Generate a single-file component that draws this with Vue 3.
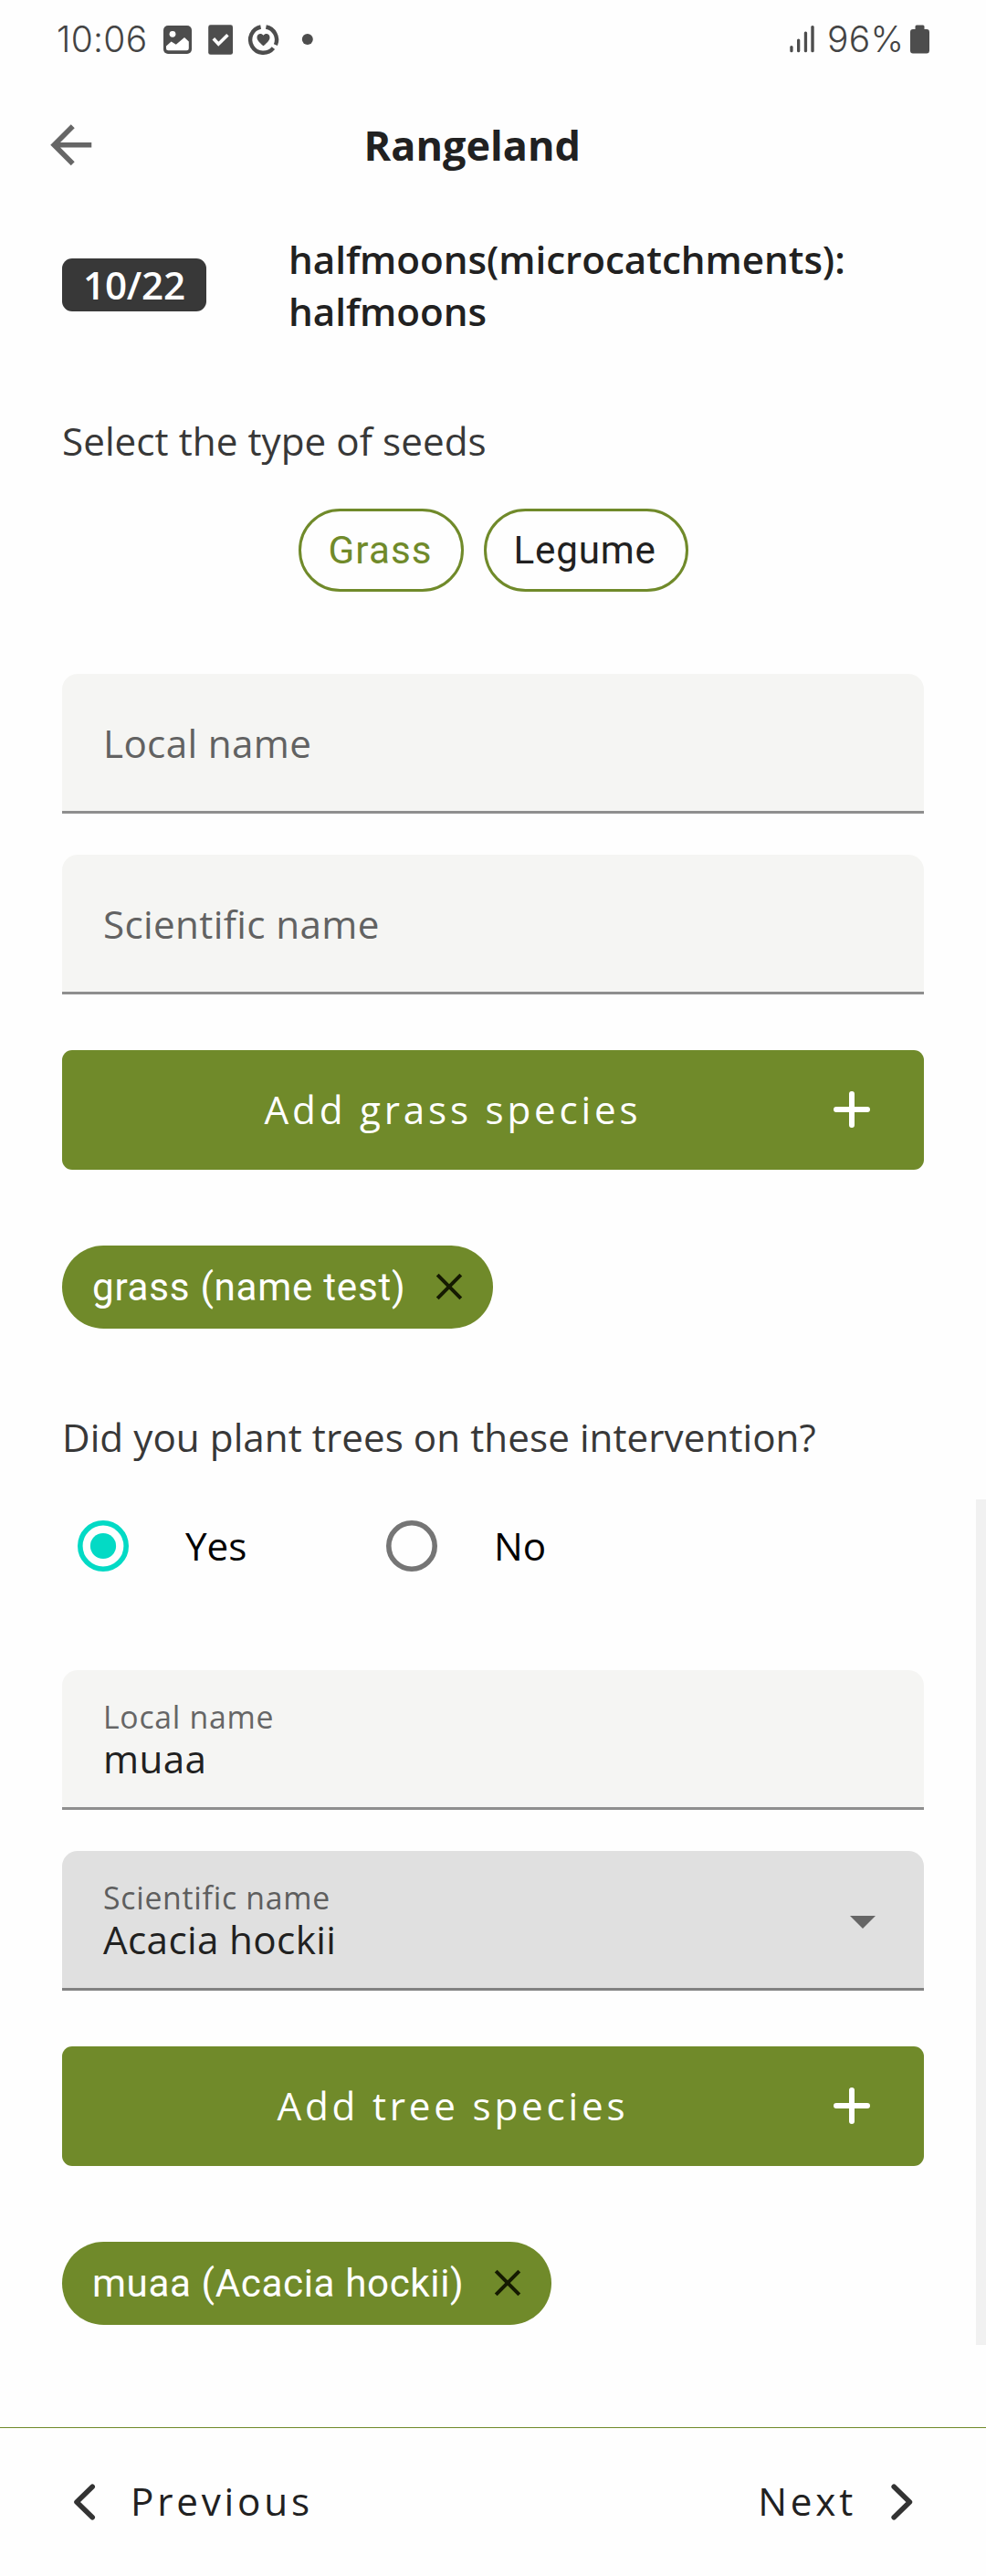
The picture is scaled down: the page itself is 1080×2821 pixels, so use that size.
<script setup>
import { ref } from 'vue'

const seedTypes = ['Grass', 'Legume']
const selectedSeed = ref('Grass')
const plantedTrees = ref('Yes')
</script>

<template>
  <div class="screen">
    <header class="status">
      <span class="clock">10:06</span>
      <svg class="status-icons" width="170" height="40" viewBox="175 23 170 40">
        <rect x="179" y="28" width="31" height="31" rx="5" fill="#4d4d4d" />
        <circle cx="189" cy="37.3" r="3.4" fill="#fff" />
        <path d="M182 50.6L187.6 45.4L192.8 48.7L202 41L206.8 45.4V53q0 2.3-2.3 2.3H184.300q-2.3 0-2.3-2.300Z" fill="#fff" />
        <rect x="228.200" y="27.300" width="26.800" height="32.500" rx="2.400" fill="#4d4d4d" />
        <path d="M233.800 42.200L239.300 48.200L249.400 38.300" fill="none" stroke="#fff" stroke-width="3.600" />
        <g fill="none" stroke="#4d4d4d" stroke-width="4.400">
          <path d="M291.400 29.500A14.300 14.300 0 0 1 301.900 49.100" />
          <path d="M299.400 52.700A14.300 14.300 0 1 1 285.600 29.500" />
        </g>
        <path d="M288.500 50.300c-2.500-2.300-7-5.500-7-9.300 0-4.300 4.900-5.200 7-2.200 2.100-3 7-2.100 7 2.200 0 3.800-4.500 7-7 9.300Z" fill="#4d4d4d" />
        <circle cx="336.800" cy="43" r="6" fill="#4d4d4d" />
      </svg>
      <svg class="signal" width="28" height="31" viewBox="865 27 28 31" fill="#4d4d4d">
        <rect x="865.300" y="50" width="3.300" height="7.300" rx="1.600" />
        <rect x="873" y="42.500" width="3.300" height="14.800" rx="1.600" />
        <rect x="880.800" y="34.500" width="3.300" height="22.800" rx="1.600" />
        <rect x="888.300" y="28" width="3.400" height="29.300" rx="1.600" />
      </svg>
      <span class="percent">96%</span>
      <svg class="battery" width="21" height="32" viewBox="0 0 21 32" fill="#4d4d4d">
        <path d="M5.500 5V2q0-1.500 1.500-1.500h7q1.500 0 1.500 1.500V5H18q3 0 3 3V28.500q0 3-3 3H3q-3 0-3-3V8q0-3 3-3Z" />
      </svg>
    </header>

    <nav class="appbar">
      <svg class="back" width="67.500" height="67.500" viewBox="0 0 24 24" fill="#666">
        <path d="M20 11H7.830l5.590-5.590L12 4l-8 8 8 8 1.410-1.410L7.830 13H20v-2z" />
      </svg>
      <h1>Rangeland</h1>
    </nav>

    <main>
      <section class="step">
        <span class="badge">10/22</span>
        <h2>halfmoons(microcatchments):<br />halfmoons</h2>
      </section>

      <p class="question">Select the type of seeds</p>
      <div class="choices">
        <button
          v-for="seed in seedTypes"
          :key="seed"
          class="choice"
          :class="[seed.toLowerCase(), { active: seed === selectedSeed }]"
          @click="selectedSeed = seed"
        >{{ seed }}</button>
      </div>

      <div class="fields">
        <div class="field empty"><span>Local name</span></div>
        <div class="field empty"><span>Scientific name</span></div>
      </div>
      <button class="add">
        <span>Add grass species</span>
        <svg width="40" height="40" viewBox="0 0 40 40"><path d="M20 3V37M3 20H37" /></svg>
      </button>
      <div class="tag grass-tag">
        <span>grass (name test)</span>
        <svg width="30" height="30" viewBox="0 0 30 30"><path d="M2.200 2.200L27.800 27.800M27.800 2.200L2.200 27.800" /></svg>
      </div>

      <p class="question trees">Did you plant trees on these intervention?</p>
      <div class="radios">
        <label v-for="option in ['Yes', 'No']" :key="option" @click="plantedTrees = option">
          <svg width="58" height="58" viewBox="0 0 58 58" :class="{ on: plantedTrees === option }">
            <circle cx="29" cy="29" r="25.200" class="ring" />
            <circle v-if="plantedTrees === option" cx="29" cy="29" r="14.100" class="dot" />
          </svg>
          <span>{{ option }}</span>
        </label>
      </div>

      <div class="fields tree-fields">
        <div class="field">
          <small>Local name</small>
          <span>muaa</span>
        </div>
        <div class="field select">
          <div>
            <small>Scientific name</small>
            <span>Acacia hockii</span>
          </div>
          <svg width="28" height="14" viewBox="0 0 28 14"><path d="M0 0H28L14 14Z" fill="#666" /></svg>
        </div>
      </div>
      <button class="add">
        <span>Add tree species</span>
        <svg width="40" height="40" viewBox="0 0 40 40"><path d="M20 3V37M3 20H37" /></svg>
      </button>
      <div class="tag tree-tag">
        <span>muaa (Acacia hockii)</span>
        <svg width="30" height="30" viewBox="0 0 30 30"><path d="M2.200 2.200L27.800 27.800M27.800 2.200L2.200 27.800" /></svg>
      </div>
    </main>

    <footer>
      <div class="nav">
        <svg width="30" height="44" viewBox="0 0 30 44"><path d="M23.200 5.200L6 22L23.200 38.800" /></svg>
        <span>Previous</span>
      </div>
      <div class="nav">
        <span>Next</span>
        <svg width="30" height="44" viewBox="0 0 30 44"><path d="M6.200 5.200L23.400 22L6.200 38.800" /></svg>
      </div>
    </footer>
    <div class="scrollbar"></div>
  </div>
</template>

<style>
body {
  margin: 0;
  background: #fefefe;
}
</style>

<style scoped>
.screen {
  position: relative;
  width: 1080px;
  height: 2821px;
  overflow: hidden;
  background: #fefefe;
  color: #212121;
  font: 400 42.2px/57px 'Open Sans', sans-serif;
}
svg {
  display: block;
  flex: none;
}
h1,
h2,
p {
  margin: 0;
}
button {
  border: 0;
  margin: 0;
  padding: 0;
  font: inherit;
}
span,
small,
h1,
h2,
p {
  white-space: nowrap;
}

.status {
  display: flex;
  align-items: flex-start;
  height: 86px;
  box-sizing: border-box;
  padding-left: 62px;
  font: 300 39px/47px Inter, sans-serif;
  letter-spacing: 0.3px;
  color: #444;
}
.clock {
  width: 113px;
  padding-top: 19px;
}
.status-icons {
  margin-top: 23px;
}
.signal {
  margin: 27px 0 0 520px;
}
.percent {
  width: 91px;
  padding: 19px 0 0 13px;
}
.battery {
  margin-top: 27px;
}

.appbar {
  display: flex;
  align-items: center;
  height: 145px;
  padding-left: 43.75px;
}
h1 {
  margin-left: 287.250px;
  font-size: 45px;
  line-height: 61px;
  font-weight: 700;
}

main {
  padding: 24px 68px 0;
}
.step {
  display: flex;
  align-items: center;
}
.badge {
  box-sizing: border-box;
  width: 158px;
  height: 58px;
  padding-left: 23px;
  border-radius: 11px;
  background: #383838;
  color: #fff;
  font-weight: 600;
  letter-spacing: -0.2px;
}
h2 {
  margin-left: 90px;
  font-size: 42.2px;
  font-weight: 600;
  letter-spacing: -0.05px;
}
.question {
  margin-top: 85px;
  color: #383838;
  letter-spacing: 0.05px;
}
.choices {
  display: flex;
  justify-content: center;
  gap: 22px;
  margin-top: 46px;
}
.choice {
  box-sizing: border-box;
  height: 91px;
  padding: 18px 0 18px 30px;
  border: 3px solid #708a2a;
  border-radius: 46px;
  background: transparent;
  color: #212121;
  font: 400 42.2px/49px Roboto, sans-serif;
  text-align: left;
}
.grass {
  width: 181px;
  letter-spacing: 1.1px;
}
.legume {
  width: 224px;
  letter-spacing: 0.8px;
}
.choice.active {
  color: #708a2a;
}

.fields {
  display: flex;
  flex-direction: column;
  gap: 45px;
  margin-top: 90px;
}
.field {
  box-sizing: border-box;
  height: 153px;
  padding: 31px 53px 0 45px;
  border-bottom: 3px solid #8e8e8e;
  border-radius: 17px 17px 0 0;
  background: #f5f5f3;
  letter-spacing: 0.36px;
  font-variant-ligatures: none;
}
.field.empty {
  padding-top: 47px;
  color: #626262;
}
.field small,
.field:not(.empty) span {
  display: block;
}
.field small {
  font-size: 33.75px;
  line-height: 40px;
  letter-spacing: 0.74px;
  color: #666;
}
.field:not(.empty) span {
  line-height: 51px;
}
.field.select {
  display: flex;
  justify-content: space-between;
  background: #e0e0e0;
  border-color: #818181;
}
.field.select small {
  color: #5e5e5e;
}
.field.select svg {
  margin-top: 40px;
}

.add {
  display: flex;
  width: 100%;
  height: 131px;
  margin-top: 61px;
  border-radius: 11px;
  background: #708a2a;
  color: #fff;
}
.add span {
  flex: 1;
  padding: 36px 0 0 11px;
  text-align: center;
  letter-spacing: 3.8px;
}
.add svg {
  margin: 45px 59px 0 0;
}
.add path {
  stroke: #fff;
  stroke-width: 6;
  stroke-linecap: round;
}

.tag {
  display: flex;
  align-items: flex-start;
  justify-content: space-between;
  box-sizing: border-box;
  height: 91px;
  margin-top: 83px;
  padding: 21px 33px 0;
  border-radius: 46px;
  background: #708a2a;
  color: #fff;
  font: 400 42.2px/49px Roboto, sans-serif;
}
.tag svg {
  margin-top: 9px;
}
.tag path {
  stroke: #151a02;
  stroke-width: 4;
}
.grass-tag {
  width: 472px;
  letter-spacing: 0.72px;
}
.tree-tag {
  width: 536px;
  letter-spacing: 0.6px;
}

.trees {
  margin-top: 90px;
}
.radios {
  display: flex;
  margin: 62px 0 0 16px;
  color: #000;
}
.radios label {
  display: flex;
  gap: 61px;
  width: 338px;
}
.ring {
  fill: none;
  stroke: #757575;
  stroke-width: 5.6;
}
.on .ring {
  stroke: #03dac5;
}
.dot {
  fill: #03dac5;
}
.tree-fields {
  margin-top: 107px;
}

footer {
  display: flex;
  justify-content: space-between;
  margin-top: 112px;
  padding: 51px 77px 0 78px;
  border-top: 1px solid #708a2a;
  letter-spacing: 3.8px;
}
.nav {
  display: flex;
  gap: 35px;
}
.nav svg {
  margin-top: 7.500px;
}
.nav path {
  fill: none;
  stroke: #333;
  stroke-width: 5.600;
  stroke-linecap: round;
  stroke-linejoin: round;
}
.scrollbar {
  position: absolute;
  right: 0;
  top: 1642px;
  width: 11px;
  height: 926px;
  background: #f1f1f1;
}
</style>
